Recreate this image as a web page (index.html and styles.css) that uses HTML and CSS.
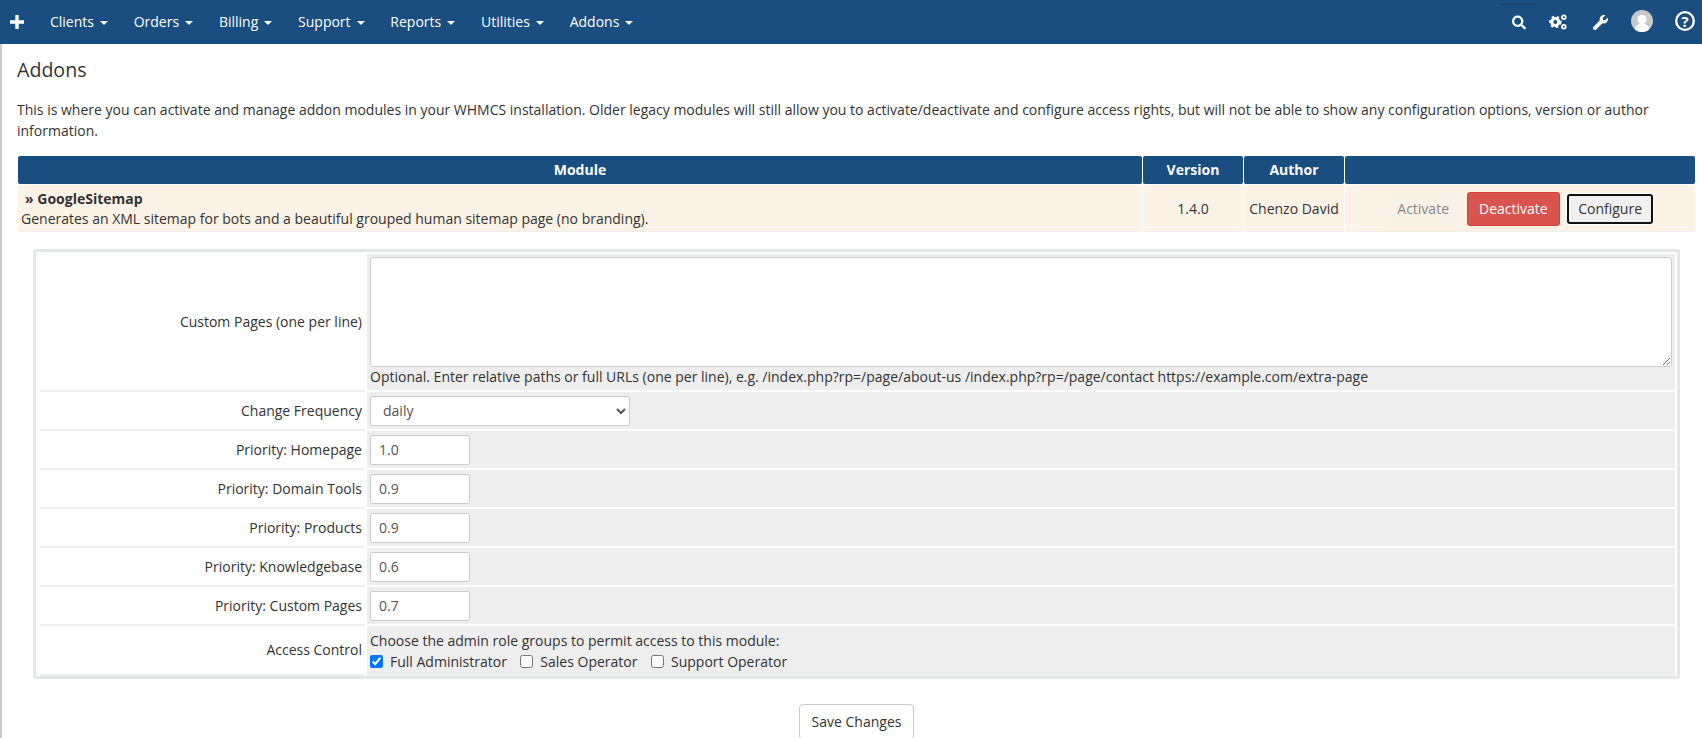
FILE: index.html
```html
<!DOCTYPE html>
<html lang="en">
<head>
<meta charset="utf-8">
<title>Addons</title>
<link rel="stylesheet" href="styles.css">
</head>
<body>
<nav class="navbar">
  <a class="plus" href="#"><svg width="14" height="14" viewBox="0 0 14 14"><path d="M5.300 0h3.400v5.300H14v3.400H8.700V14H5.300V8.700H0V5.300h5.300z" fill="#fff"/></svg></a>
  <ul class="menu">
    <li>Clients<span class="caret"></span></li>
    <li>Orders<span class="caret"></span></li>
    <li>Billing<span class="caret"></span></li>
    <li>Support<span class="caret"></span></li>
    <li>Reports<span class="caret"></span></li>
    <li>Utilities<span class="caret"></span></li>
    <li>Addons<span class="caret"></span></li>
  </ul>
  <div class="tools">
    <span class="stray-line"></span>
    <svg class="tool t-search" width="14" height="15" viewBox="0 0 512 512"><path fill="#fff" d="M505 442.700L405.300 343c-4.500-4.500-10.600-7-17-7H372c27.600-35.300 44-79.700 44-128C416 93.100 322.900 0 208 0S0 93.100 0 208s93.100 208 208 208c48.300 0 92.700-16.400 128-44v16.300c0 6.400 2.500 12.500 7 17l99.700 99.700c9.400 9.400 24.600 9.400 33.900 0l28.300-28.300c9.400-9.400 9.400-24.600.1-34zM208 336c-70.700 0-128-57.200-128-128 0-70.700 57.200-128 128-128 70.700 0 128 57.200 128 128 0 70.700-57.200 128-128 128z"/></svg>
    <svg class="tool t-cogs" width="18" height="16" viewBox="0 0 18 16">
      <circle cx="6.300" cy="8" r="3.500" fill="none" stroke="#fff" stroke-width="3"/>
      <circle cx="6.300" cy="8" r="5.200" fill="none" stroke="#fff" stroke-width="2.200" stroke-dasharray="2.300 2.780"/>
      <circle cx="14.800" cy="3.200" r="1.900" fill="none" stroke="#fff" stroke-width="1.700"/>
      <circle cx="14.800" cy="12.800" r="1.900" fill="none" stroke="#fff" stroke-width="1.700"/>
    </svg>
    <svg class="tool t-wrench" width="15" height="15" viewBox="0 0 512 512"><path fill="#fff" d="M507.730 109.100c-2.240-9.030-13.540-12.090-20.120-5.510l-74.360 74.360-67.880-11.310-11.310-67.880 74.360-74.360c6.620-6.620 3.430-17.900-5.660-20.160-47.380-11.740-99.550.91-136.580 37.930-39.640 39.640-50.550 97.100-34.050 147.200L18.740 402.760c-24.990 24.990-24.990 65.510 0 90.500 24.990 24.990 65.510 24.990 90.500 0l213.210-213.210c50.120 16.710 107.470 5.680 147.370-34.220 37.070-37.070 49.700-89.320 37.910-136.730z"/></svg>
    <svg class="tool t-avatar" width="22" height="22" viewBox="0 0 22 22"><defs><clipPath id="av"><circle cx="11" cy="11" r="11"/></clipPath></defs><circle cx="11" cy="11" r="11" fill="#c9c9c9"/><g clip-path="url(#av)" fill="#fff"><circle cx="11" cy="9.500" r="4.600"/><ellipse cx="11" cy="20" rx="7.500" ry="6.500"/></g></svg>
    <svg class="tool t-help" width="20" height="20" viewBox="0 0 20 20"><circle cx="10" cy="10" r="8.800" fill="none" stroke="#fff" stroke-width="2.300"/><text x="10" y="15.500" text-anchor="middle" class="help-q">?</text></svg>
  </div>
</nav>

<main class="content">
  <h1 class="title">Addons</h1>
  <p class="intro">This is where you can activate and manage addon modules in your WHMCS installation. Older legacy modules will still allow you to activate/deactivate and configure access rights, but will not be able to show any configuration options, version or author information.</p>

  <table class="modules">
    <thead>
      <tr><th class="c-module">Module</th><th class="c-version">Version</th><th class="c-author">Author</th><th class="c-actions"></th></tr>
    </thead>
    <tbody>
      <tr>
        <td class="mod-info"><strong class="mod-name">» GoogleSitemap</strong><br>Generates an XML sitemap for bots and a beautiful grouped human sitemap page (no branding).</td>
        <td class="centered">1.4.0</td>
        <td class="centered">Chenzo David</td>
        <td class="actions-cell">
          <div class="actions">
            <span class="btn btn-disabled">Activate</span>
            <span class="btn btn-danger">Deactivate</span>
            <span class="btn btn-focus">Configure</span>
          </div>
        </td>
      </tr>
    </tbody>
  </table>

  <div class="panel">
    <table class="settings">
      <tr>
        <td class="lbl">Custom Pages (one per line)</td>
        <td class="fld fld-ta"><textarea class="ta"></textarea><div class="hint">Optional. Enter relative paths or full URLs (one per line), e.g. /index.php?rp=/page/about-us /index.php?rp=/page/contact https://example.com/extra-page</div></td>
      </tr>
      <tr>
        <td class="lbl">Change Frequency</td>
        <td class="fld"><select class="sel"><option>daily</option></select></td>
      </tr>
      <tr><td class="lbl">Priority: Homepage</td><td class="fld"><input class="inp" value="1.0"></td></tr>
      <tr><td class="lbl">Priority: Domain Tools</td><td class="fld"><input class="inp" value="0.9"></td></tr>
      <tr><td class="lbl">Priority: Products</td><td class="fld"><input class="inp" value="0.9"></td></tr>
      <tr><td class="lbl">Priority: Knowledgebase</td><td class="fld"><input class="inp" value="0.6"></td></tr>
      <tr><td class="lbl">Priority: Custom Pages</td><td class="fld"><input class="inp" value="0.7"></td></tr>
      <tr>
        <td class="lbl">Access Control</td>
        <td class="fld fld-ac">
          <div>Choose the admin role groups to permit access to this module:</div>
          <div class="checks">
            <label class="chk"><input type="checkbox" checked>Full Administrator</label>
            <label class="chk"><input type="checkbox">Sales Operator</label>
            <label class="chk"><input type="checkbox">Support Operator</label>
          </div>
        </td>
      </tr>
    </table>
  </div>

  <div class="save-row"><button class="save" type="button">Save Changes</button></div>
</main>
</body>
</html>
```
FILE: styles.css
```css
* { box-sizing: border-box; }
html, body { height: 100%; overflow: hidden; }
body {
  margin: 0;
  background: #fff;
  color: #333;
  font: 14px/20px "Open Sans", "Liberation Sans", sans-serif;
}
.navbar {
  display: flex;
  align-items: center;
  height: 44px;
  background: #1a4d80;
  color: #fff;
}
.plus { display: flex; margin-left: 10px; width: 27px; }
.menu { display: flex; list-style: none; margin: 0; padding: 0; }
.menu li { padding: 0 12.900px; white-space: nowrap; }
.caret {
  display: inline-block;
  margin-left: 6px;
  vertical-align: middle;
  border-top: 4px solid #fff;
  border-left: 4px solid transparent;
  border-right: 4px solid transparent;
}
.tools { display: flex; align-items: center; margin-left: auto; margin-right: 7px; }
.stray-line {
  position: absolute;
  top: 4px;
  left: 1500px;
  width: 37px;
  height: 1px;
  background: #174370;
}
.t-search { margin-right: 23px; }
.t-cogs { margin-right: 26px; }
.t-wrench { margin-right: 23px; }
.t-avatar { margin-right: 22px; margin-bottom: 2px; }
.t-help { margin-bottom: 2px; }
.help-q { fill: #fff; font: 700 15px "Open Sans", sans-serif; }

.content {
  height: calc(100% - 44px);
  padding: 0 6px 0 15px;
  border-left: 2px solid #ccc;
}
.title { margin: 0; padding-top: 15px; font-size: 19.600px; line-height: 22px; font-weight: 400; }
.intro { margin: 18px 0 0; line-height: 21px; }

.modules {
  width: 100%;
  margin-top: 14px;
  border-collapse: separate;
  border-spacing: 1px;
  table-layout: fixed;
}
.modules th {
  height: 28px;
  padding: 0;
  background: #1a4d80;
  color: #fff;
  font-weight: 700;
  border-radius: 2px;
}
.c-version, .c-author { width: 100px; }
.c-actions { width: 350px; }
.modules td {
  height: 47px;
  padding: 2px 3px 0;
  background: #fcf3e6;
  border-bottom: 1px solid #eee;
}
.mod-info { line-height: 20px; }
.mod-name { margin-left: 4px; color: #333; }
.centered { text-align: center; }
.modules td.actions-cell { padding: 2px 42px 0 0; }
.actions { display: flex; justify-content: flex-end; align-items: center; white-space: nowrap; }
.btn {
  padding: 6px 11.500px;
  border: 1px solid transparent;
  border-radius: 3px;
  line-height: 20px;
}
.btn-disabled { margin-right: 5px; background: #f9f2e7; color: #888; }
.btn-danger { margin-right: 7px; background: #d9534f; border-color: #d43f3a; color: #fff; }
.btn-focus {
  padding: 3px 9px;
  background: #f0f0f0;
  border: 2px solid #111;
  box-shadow: 0 0 0 1px #fff;
}

.panel {
  margin: 16px 16px 0 16px;
  padding: 2px 0 0 2px;
  border: 3px solid #e3e7ea;
  border-radius: 3px;
}
.settings { width: 100%; border-collapse: separate; border-spacing: 2px 0; table-layout: fixed; }
.lbl {
  width: 325px;
  padding: 0 3px 0 0;
  text-align: right;
  border-bottom: 2px solid #eee;
}
.fld {
  height: 39px;
  padding: 0 3px;
  background: #eee;
  border-bottom: 2px solid #fff;
}
.fld-ac { height: 50px; padding-top: 0; padding-bottom: 0; border-bottom: 0; }
.ta {
  display: block;
  width: 100%;
  height: 110px;
  margin-top: 3px;
  border: 1px solid #ccc;
  border-radius: 3px;
  background: #fff;
}
.hint { padding: 0 0 3px; line-height: 20px; }
.sel, .inp {
  display: block;
  height: 30px;
  border: 1px solid #ccc;
  border-radius: 2px;
  background: #fff;
  color: #555;
  font: inherit;
}
.sel { width: 260px; padding: 0 8px; }
.inp { width: 100px; padding: 0 8px; }
.checks { display: flex; gap: 13.500px; margin-top: 1px; }
.chk { display: flex; align-items: center; }
.chk input { margin: 0 7px 0 0; width: 13px; height: 13px; }

.save-row { display: flex; justify-content: center; margin-top: 25px; }
.save {
  width: 115px;
  height: 36px;
  border: 1px solid #ccc;
  border-radius: 4px;
  background: #fff;
  color: #333;
  font: inherit;
}
```
